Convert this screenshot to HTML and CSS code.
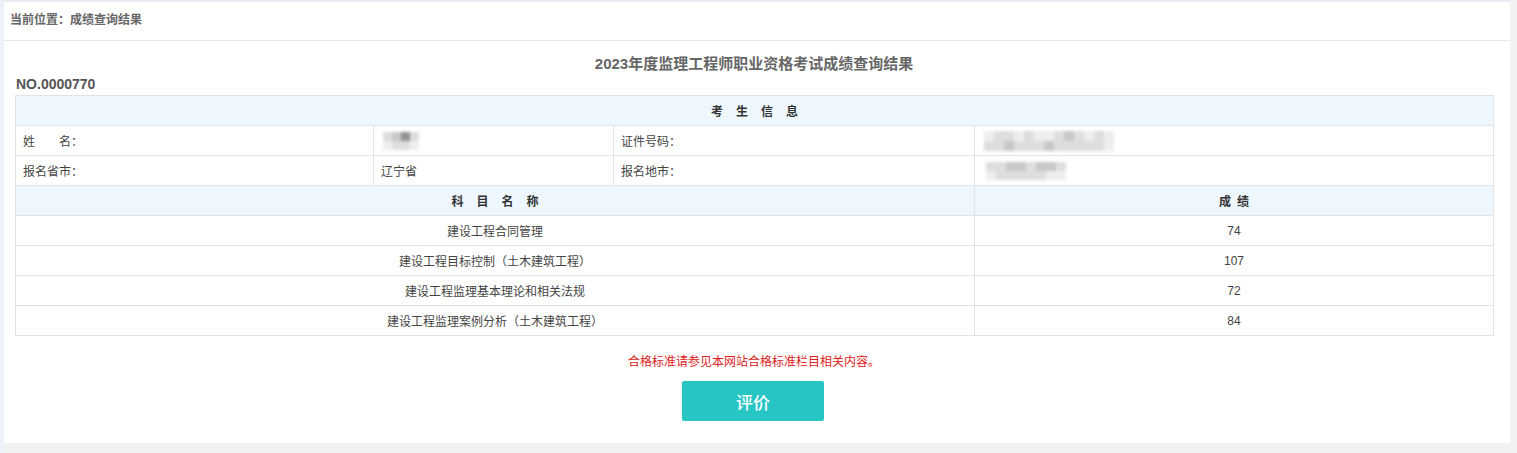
FILE: index.html
```html
<!DOCTYPE html>
<html lang="zh-CN">
<head>
<meta charset="utf-8">
<title>成绩查询结果</title>
<link rel="stylesheet" href="styles.css">
</head>
<body>
<div class="page">
  <div class="panel">
    <div class="crumb">当前位置：成绩查询结果</div>
    <div class="content">
      <h1 class="title">2023年度监理工程师职业资格考试成绩查询结果</h1>
      <div class="serial">NO.0000770</div>
      <table class="score-table">
        <colgroup>
          <col class="c1"><col class="c2"><col class="c3"><col class="c4">
        </colgroup>
        <tr class="head">
          <th colspan="4"><span class="wide">考生信息</span></th>
        </tr>
        <tr>
          <td>姓　　名：</td>
          <td class="masked">
            <span class="mosaic name">
              <i class="m2"></i><i class="m3"></i><i class="m4"></i><i class="m2"></i>
              <i class="m1"></i><i class="m2"></i><i class="m2"></i><i class="m1"></i>
            </span>
          </td>
          <td>证件号码：</td>
          <td class="masked">
            <span class="mosaic idno">
              <i class="m1"></i><i class="m2"></i><i class="m2"></i><i class="m1"></i><i class="m2"></i><i class="m1"></i><i class="m1"></i><i class="m2"></i><i class="m3"></i><i class="m2"></i><i class="m1"></i><i class="m2"></i><i class="m1"></i>
              <i class="m2"></i><i class="m2"></i><i class="m3"></i><i class="m2"></i><i class="m2"></i><i class="m2"></i><i class="m3"></i><i class="m2"></i><i class="m2"></i><i class="m2"></i><i class="m2"></i><i class="m2"></i><i class="m1"></i>
            </span>
          </td>
        </tr>
        <tr>
          <td>报名省市：</td>
          <td>辽宁省</td>
          <td>报名地市：</td>
          <td class="masked">
            <span class="mosaic city">
              <i class="m2"></i><i class="m2"></i><i class="m3"></i><i class="m3"></i><i class="m2"></i><i class="m3"></i><i class="m3"></i><i class="m2"></i>
              <i class="m1"></i><i class="m2"></i><i class="m2"></i><i class="m2"></i><i class="m2"></i><i class="m2"></i><i class="m1"></i><i class="m1"></i>
            </span>
          </td>
        </tr>
        <tr class="head">
          <th colspan="3"><span class="wide">科目名称</span></th>
          <th><span class="narrow">成绩</span></th>
        </tr>
        <tr class="subject">
          <td colspan="3">建设工程合同管理</td>
          <td>74</td>
        </tr>
        <tr class="subject">
          <td colspan="3">建设工程目标控制（土木建筑工程）</td>
          <td>107</td>
        </tr>
        <tr class="subject">
          <td colspan="3">建设工程监理基本理论和相关法规</td>
          <td>72</td>
        </tr>
        <tr class="subject">
          <td colspan="3">建设工程监理案例分析（土木建筑工程）</td>
          <td>84</td>
        </tr>
      </table>
      <p class="note">合格标准请参见本网站合格标准栏目相关内容。</p>
      <div class="actions">
        <button class="rate-btn" type="button">评价</button>
      </div>
    </div>
  </div>
</div>
</body>
</html>
```

FILE: styles.css
```css
html, body {
  margin: 0;
  padding: 0;
}

body {
  background: #f2f2f2;
  font-family: "Liberation Sans", "Noto Sans CJK SC", sans-serif;
  font-size: 12px;
  color: #444;
}

.page {
  width: 1510px;
  height: 453px;
  box-sizing: border-box;
  border-left: 4px solid #edf2fa;
}

.panel {
  height: 443px;
  box-sizing: border-box;
  border-top: 2px solid #e6ebf1;
  background: #fff;
}

.crumb {
  height: 38px;
  line-height: 37px;
  padding-left: 6px;
  border-bottom: 1px solid #e6e6e6;
  font-weight: bold;
  color: #666;
}

.content {
  padding: 0 17px 0 11px;
}

.title {
  margin: 13px 0 0;
  height: 20px;
  line-height: 20px;
  text-align: center;
  font-size: 15px;
  font-weight: bold;
  color: #666;
}

.serial {
  margin-top: 2px;
  height: 16px;
  line-height: 16px;
  padding-left: 1px;
  font-weight: bold;
  font-size: 14px;
  color: #555;
}

.score-table {
  margin-top: 3px;
  width: 1478px;
  border-collapse: collapse;
  table-layout: fixed;
}

.c1 { width: 358px; }
.c2 { width: 240px; }
.c3 { width: 361px; }
.c4 { width: 519px; }

.score-table th,
.score-table td {
  height: 29px;
  padding: 0 7px;
  border: 1px solid #e3e3e3;
  text-align: left;
  font-weight: normal;
  color: #444;
  white-space: nowrap;
}

.score-table tr.head th {
  background: #eef6fe;
  text-align: center;
  font-weight: bold;
  color: #333;
}

.wide {
  letter-spacing: 13px;
  padding-left: 13px;
}

.narrow {
  letter-spacing: 6px;
  padding-left: 6px;
}

.score-table tr.subject td {
  text-align: center;
}

/* blurred personal fields */
.masked {
  padding-left: 0;
}

.mosaic {
  display: inline-grid;
  vertical-align: middle;
  filter: blur(1.4px);
}

.mosaic i {
  display: block;
}

.mosaic.name {
  grid-template-columns: repeat(4, 9px);
  grid-auto-rows: 9px;
  margin-left: 2px;
}

.mosaic.idno {
  grid-template-columns: repeat(13, 10px);
  grid-auto-rows: 10px;
  margin-left: 2px;
}

.mosaic.city {
  grid-template-columns: repeat(8, 10px);
  grid-auto-rows: 9px;
  margin-left: 4px;
}

.m1 { background: #eeeeee; }
.m2 { background: #dedede; }
.m3 { background: #c8c8c8; }
.m4 { background: #929292; }

.note {
  margin: 18px 0 0;
  height: 16px;
  line-height: 16px;
  text-align: center;
  color: #e02020;
  font-size: 12px;
}

.actions {
  margin-top: 11px;
  display: flex;
  justify-content: center;
}

.rate-btn {
  width: 142px;
  height: 40px;
  margin-left: -2px;
  border: 0;
  border-radius: 2px;
  background: #27c6c5;
  color: #fff;
  font-family: "Noto Sans CJK SC", sans-serif;
  font-size: 17px;
  font-weight: 500;
  cursor: pointer;
}
```
